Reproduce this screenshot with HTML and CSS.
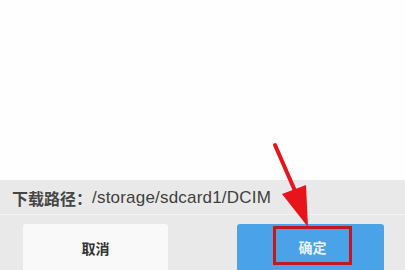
FILE: index.html
```html
<!DOCTYPE html>
<html lang="zh">
<head>
<meta charset="utf-8">
<link rel="stylesheet" href="styles.css">
</head>
<body>
<div class="screen">
  <div class="blank"></div>
  <div class="panel">
    <div class="path"><span class="label">下载路径：</span><span class="dir">/storage/sdcard1/DCIM</span></div>
    <div class="buttons">
      <div class="btn cancel">取消</div>
      <div class="btn ok"><span class="mark">确定</span></div>
    </div>
  </div>
  <svg class="arrow" width="60" height="100" viewBox="0 0 60 100">
    <line x1="5" y1="15" x2="29" y2="70" stroke="#e8141c" stroke-width="4" stroke-linecap="round"/>
    <polygon points="12,64 36,55 38,97" fill="#e8141c"/>
  </svg>
</div>
</body>
</html>
```
FILE: styles.css
```css
html, body {
  margin: 0;
  padding: 0;
  background: #ffffff;
}
.screen {
  position: relative;
  width: 405px;
  height: 270px;
  overflow: hidden;
  font-family: "Noto Sans CJK SC", "Liberation Sans", sans-serif;
  display: flex;
  flex-direction: column;
}
.blank {
  height: 180px;
  flex: none;
  background: #fefefe;
}
.panel {
  flex: 1;
  background: #e9e9e9;
  display: flex;
  flex-direction: column;
}
.path {
  height: 35px;
  padding-left: 12px;
  display: flex;
  align-items: center;
  padding-top: 2px;
  box-sizing: border-box;
  color: #3f3f3f;
  border-bottom: 1px solid #f3f3f3;
}
.label {
  font-size: 16px;
  font-weight: bold;
  color: #464646;
}
.dir {
  font-family: "Liberation Sans", sans-serif;
  font-size: 17px;
  letter-spacing: 0.2px;
}
.buttons {
  display: flex;
  padding: 9px 21px 0 23px;
  gap: 69px;
}
.btn {
  height: 48px;
  border-radius: 3px;
  display: flex;
  align-items: center;
  justify-content: center;
  font-size: 14px;
  font-weight: bold;
}
.cancel {
  background: #f9f9f9;
  color: #333;
  width: 145px;
}
.ok {
  background: #4aa3e9;
  color: #e8f2fb;
  width: 147px;
  padding-left: 4px;
  box-sizing: border-box;
  align-items: flex-start;
}
.mark {
  margin-top: 2px;
  width: 73px;
  height: 30px;
  padding-top: 3px;
  border: 3px solid #c8161e;
  display: flex;
  align-items: center;
  justify-content: center;
}
.arrow {
  position: absolute;
  left: 270px;
  top: 130px;
}
```
